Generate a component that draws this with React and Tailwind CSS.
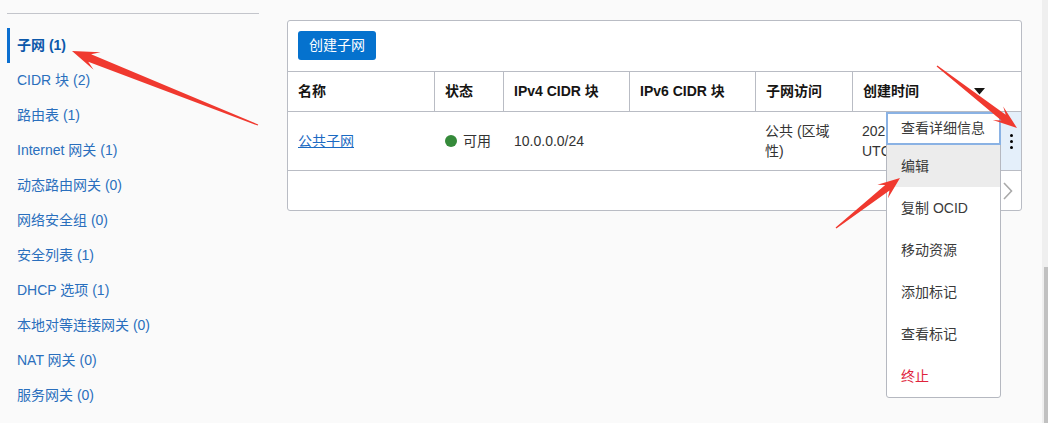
import React from "react";

const font = { fontFamily: '"Liberation Sans", "Noto Sans CJK SC", sans-serif' };

const navItems = [
  "CIDR 块 (2)",
  "路由表 (1)",
  "Internet 网关 (1)",
  "动态路由网关 (0)",
  "网络安全组 (0)",
  "安全列表 (1)",
  "DHCP 选项 (1)",
  "本地对等连接网关 (0)",
  "NAT 网关 (0)",
  "服务网关 (0)",
];

const menuItems = ["复制 OCID", "移动资源", "添加标记", "查看标记"];

// tapered annotation arrow, tip/tail in page pixels
const arrowPoints = (tip, tail, head = 24, wing = 9, neck = 18, shaft = 3.5) => {
  const dx = tail[0] - tip[0];
  const dy = tail[1] - tip[1];
  const len = Math.hypot(dx, dy);
  const u = [dx / len, dy / len];
  const n = [-u[1], u[0]];
  const at = (d, w) => [tip[0] + u[0] * d + n[0] * w, tip[1] + u[1] * d + n[1] * w];
  const pts = [
    tip,
    at(head, wing),
    at(neck, shaft),
    at(len, 0.6),
    at(len, -0.6),
    at(neck, -shaft),
    at(head, -wing),
  ];
  return pts.map((p) => p.map((v) => v.toFixed(1)).join(",")).join(" ");
};

const Arrows = () => (
  <svg className="absolute inset-0 pointer-events-none" width="1048" height="423">
    <polygon points={arrowPoints([72, 51], [258, 125], 27, 9.5, 19, 4)} fill="#f0392f" />
    <polygon points={arrowPoints([1017, 128], [937, 66], 24, 8.5, 17, 3.5)} fill="#f0392f" />
    <polygon points={arrowPoints([900, 178], [836, 228], 22, 8.5, 16, 3.5)} fill="#f0392f" />
  </svg>
);

const App = () => {
  return (
    <div className="relative flex w-[1048px] h-[423px] bg-[#fafafa] overflow-hidden text-[14px]" style={font}>
      <div className="flex w-[1042px] pl-[7px] pt-[13px]">
        {/* sidebar */}
        <div className="w-[252px] border-t border-[#c3c5cb] pt-[14px]">
          <div className="h-[35px] flex items-center border-l-[3px] border-[#0b6fd0] pl-[7px] font-bold text-[#0c58aa]">
            子网 (1)
          </div>
          {navItems.map((item) => (
            <div key={item} className="h-[35px] flex items-center pl-[10px] text-[#2a6fbd]">
              {item}
            </div>
          ))}
        </div>

        {/* subnets card */}
        <div className="ml-[28px] mt-[7px] w-[735px] h-[191px] bg-white border border-[#b9bcc4] rounded-[3px]">
          <div className="h-[51px] border-b border-[#b9bcc4] pt-[10px] pl-[10px]">
            <button className="h-[29px] px-[11px] rounded-[3px] bg-[#0572ce] text-white">创建子网</button>
          </div>

          <div className="grid grid-cols-[146px_69px_126px_126px_97px_149px_20px] h-[40px] border-b border-[#b9bcc4] font-bold text-[#161513]">
            <div className="flex items-center pl-[10px]">名称</div>
            <div className="flex items-center pl-[10px] border-l border-[#b9bcc4]">状态</div>
            <div className="flex items-center pl-[10px] border-l border-[#b9bcc4]">IPv4 CIDR 块</div>
            <div className="flex items-center pl-[10px] border-l border-[#b9bcc4]">IPv6 CIDR 块</div>
            <div className="flex items-center pl-[10px] border-l border-[#b9bcc4]">子网访问</div>
            <div className="flex items-center justify-between pl-[10px] pr-[16px] border-l border-[#b9bcc4]">
              创建时间
              <svg width="11" height="7" viewBox="0 0 11 7">
                <polygon points="0,0 11,0 5.5,6.5" fill="#161513" />
              </svg>
            </div>
            <div />
          </div>

          <div className="grid grid-cols-[146px_69px_126px_126px_97px_149px_20px] h-[59px] border-b border-[#b9bcc4] text-[#333] leading-[20px]">
            <div className="flex items-center pl-[10px]">
              <span className="text-[#1b6ac2] underline">公共子网</span>
            </div>
            <div className="flex items-center gap-[6px] pl-[11px]">
              <span className="w-[12px] h-[12px] rounded-full bg-[#358a3a]" />
              可用
            </div>
            <div className="flex items-center pl-[11px]">10.0.0.0/24</div>
            <div />
            <div className="flex items-center pl-[10px] pr-[10px]">公共 (区域性)</div>
            <div className="flex flex-col justify-center pl-[10px]">
              <span>202</span>
              <span>UTC</span>
            </div>
            <div className="flex flex-col items-center justify-center gap-[3px] bg-[#e4effa]">
              <span className="w-[3px] h-[3px] rounded-full bg-black" />
              <span className="w-[3px] h-[3px] rounded-full bg-black" />
              <span className="w-[3px] h-[3px] rounded-full bg-black" />
            </div>
          </div>

          <div className="flex justify-end h-[39px]">
            <div className="w-[20px] flex items-center pl-[2px]">
              <svg width="10" height="18" viewBox="0 0 10 18">
                <polyline points="1,1 8.5,9 1,17" fill="none" stroke="#a9a9a9" strokeWidth="1.6" />
              </svg>
            </div>
          </div>
        </div>
      </div>

      {/* page scrollbar */}
      <div className="w-[6px] flex flex-col bg-[#efefef]">
        <div className="h-[267px]" />
        <div className="flex-1 ml-[2px] bg-[#c1c1c1]" />
      </div>

      {/* row actions menu */}
      <div className="absolute left-[886px] top-[112px] w-[115px] h-[286px] bg-white border border-[#b5b8c0] rounded-b-[3px] text-[#3a3a3a]">
        <div className="h-[33px] -mt-px -mx-px flex items-center pl-[13px] border-2 border-[#8ab2e4]">查看详细信息</div>
        <div className="h-[42px] flex items-center pl-[14px] bg-[#ececec]">编辑</div>
        {menuItems.map((item) => (
          <div key={item} className="h-[42px] flex items-center pl-[14px]">
            {item}
          </div>
        ))}
        <div className="h-[42px] flex items-center pl-[14px] text-[#e0233c]">终止</div>
      </div>

      <Arrows />
    </div>
  );
};

export default App;
